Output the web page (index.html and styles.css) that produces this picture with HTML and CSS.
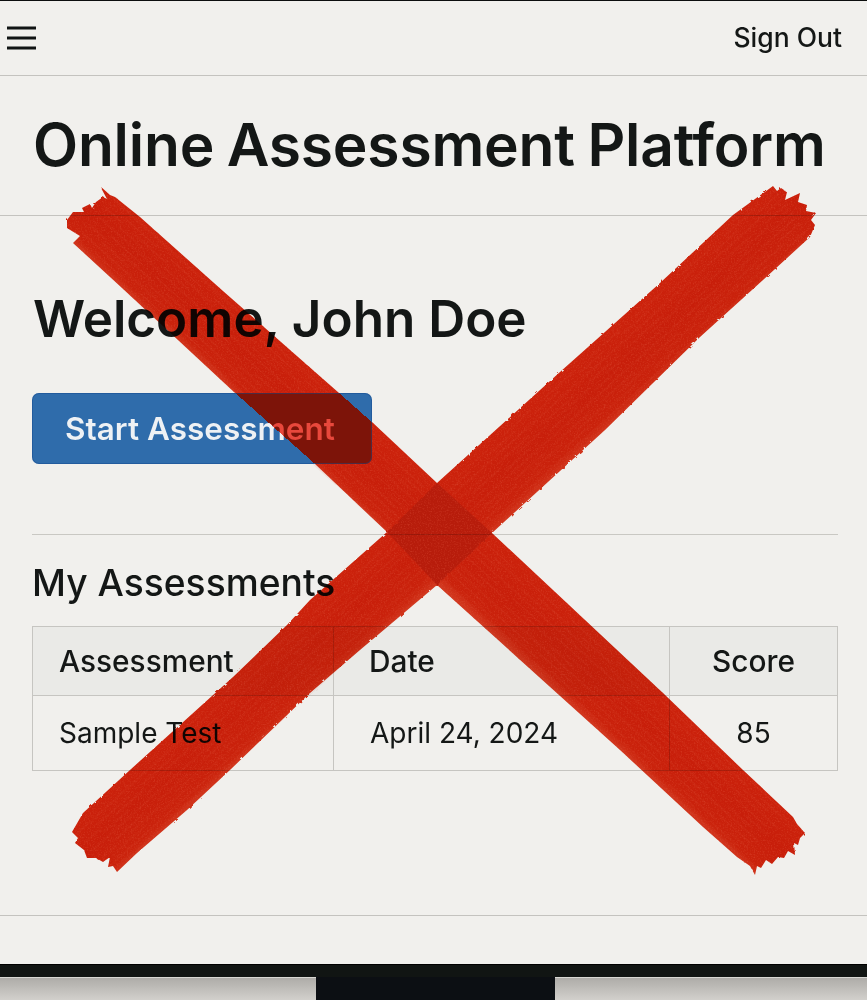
FILE: index.html
```html
<!DOCTYPE html>
<html lang="en">
<head>
    <meta charset="UTF-8">
    <meta name="viewport" content="width=device-width, initial-scale=1.0">
    <title>Online Assessment Platform</title>
    <link rel="stylesheet" href="styles.css">
</head>
<body>
    <div class="screen">
        <div class="topbar">
            <svg class="menu-icon" width="30" height="24" viewBox="0 0 30 24">
                <path d="M0 2H29M0 12H29M0 22H29" stroke="#111414" stroke-width="3" fill="none"/>
            </svg>
            <a class="sign-out">Sign Out</a>
        </div>
        <div class="title-bar">
            <h1>Online Assessment Platform</h1>
        </div>
        <div class="content">
            <h2>Welcome, John Doe</h2>
            <button class="start-btn"><span>Start Assessment</span></button>
            <hr>
            <h3>My Assessments</h3>
            <table class="results">
                <thead>
                    <tr>
                        <th class="col-name">Assessment</th>
                        <th class="col-date">Date</th>
                        <th class="col-score">Score</th>
                    </tr>
                </thead>
                <tbody>
                    <tr>
                        <td>Sample Test</td>
                        <td class="date-cell">April 24, 2024</td>
                        <td class="col-score">85</td>
                    </tr>
                </tbody>
            </table>
        </div>
        <div class="footer-line"></div>
    </div>
    <div class="bezel"></div>
    <div class="stand">
        <div class="desk"></div>
        <div class="neck"></div>
        <div class="desk"></div>
    </div>

    <!-- red cross painted over the page -->
    <svg class="cross" width="867" height="1000" viewBox="0 0 867 1000">
        <defs>
            <filter id="brush" x="0" y="0" width="867" height="1000" filterUnits="userSpaceOnUse" color-interpolation-filters="sRGB">
                <feTurbulence type="fractalNoise" baseFrequency="0.18" numOctaves="3" seed="4" result="wobble"/>
                <feDisplacementMap in="SourceGraphic" in2="wobble" scale="2.5" result="rough"/>
                <feTurbulence type="fractalNoise" baseFrequency="0.7" numOctaves="2" seed="9" result="grain"/>
                <feColorMatrix in="grain" type="matrix" values="0 0 0 0 0.95  0 0 0 0 0.4  0 0 0 0 0.3  0 0 0 0.8 -0.38" result="spots"/>
                <feComposite in="spots" in2="rough" operator="in" result="light"/>
                <feMerge>
                    <feMergeNode in="rough"/>
                    <feMergeNode in="light"/>
                </feMerge>
            </filter>
            <linearGradient id="paint-down" gradientUnits="userSpaceOnUse" x1="437" y1="483" x2="388" y2="536">
                <stop offset="0" stop-color="#d8240c"/>
                <stop offset=".5" stop-color="#d4200a"/>
                <stop offset=".88" stop-color="#d6240c"/>
                <stop offset="1" stop-color="#de3a20"/>
            </linearGradient>
            <linearGradient id="paint-up" gradientUnits="userSpaceOnUse" x1="437" y1="483" x2="487" y2="538">
                <stop offset="0" stop-color="#d8240c"/>
                <stop offset=".5" stop-color="#d4200a"/>
                <stop offset=".88" stop-color="#d6240c"/>
                <stop offset="1" stop-color="#de3a20"/>
            </linearGradient>
            <pattern id="streaks-down" width="60" height="23" patternUnits="userSpaceOnUse" patternTransform="rotate(42)">
                <path d="M0 3H60M0 9.5H42M20 15H60M0 20H34" stroke="#e8553c" stroke-width="1" opacity=".18" fill="none"/>
            </pattern>
            <pattern id="streaks-up" width="60" height="23" patternUnits="userSpaceOnUse" patternTransform="rotate(-42)">
                <path d="M0 4H60M0 11H42M20 16H60M0 21H34" stroke="#e8553c" stroke-width="1" opacity=".18" fill="none"/>
            </pattern>
        </defs>
        <g filter="url(#brush)">
            <polygon fill="url(#paint-down)" points="115,197 140,217 223,291 372,422 437,483 492,533 663,693 743,770 793,817 797,824 805,833 800,838 798,845 794,843 795,855 788,851 784,858 778,857 772,864 766,860 761,868 757,866 755,875 750,866 737,857 703,827 620,750 437,585 387,532 315,464 235,393 122,288 73,243 80,236 67,228 67,220 73,212 84,212 82,208 90,204 92,208 96,202 103,197 107,199 100,186 110,195"/>
            <polygon fill="url(#paint-up)" points="773,186 777,191 781,188 787,192 785,200 800,193 798,202 807,205 806,211 816,213 811,220 815,225 810,237 763,280 700,337 605,430 492,533 437,585 360,650 310,693 230,770 187,810 137,853 117,872 113,866 108,867 110,857 103,862 96,858 87,858 84,850 75,843 78,838 72,832 83,813 130,770 233,677 287,625 310,600 387,532 437,483 560,372 660,283 733,215"/>
            <polygon fill="url(#streaks-down)" points="115,197 793,817 737,857 73,243"/>
            <polygon fill="url(#streaks-up)" points="773,186 810,237 117,872 72,832"/>
            <polygon class="overlap" points="437,483 492,533 437,585 387,532"/>
        </g>
    </svg>
</body>
</html>
```

FILE: styles.css
```css
* {
    box-sizing: border-box;
}

html, body {
    height: 1000px;
    overflow: hidden;
}

body {
    margin: 0;
    background: #f1f0ed;
    color: #141716;
    font-family: "Inter", "Liberation Sans", sans-serif;
}

.screen {
    height: 964px;
    border-top: 1px solid #0c0e0e;
    display: flex;
    flex-direction: column;
}

.topbar {
    height: 75px;
    padding: 0 25px 0 7px;
    border-bottom: 1px solid #c4c3bf;
    display: flex;
    align-items: center;
    justify-content: space-between;
}

.sign-out {
    font-size: 26.5px;
    font-weight: 500;
    margin-bottom: 2px;
}

.title-bar {
    height: 140px;
    padding: 0 33px;
    border-bottom: 1px solid #c4c3bf;
}

h1 {
    margin: 0;
    padding-top: 34px;
    font-size: 58.7px;
    line-height: 70px;
    font-weight: 600;
    letter-spacing: -0.2px;
    word-spacing: -2px;
    white-space: nowrap;
}

.content {
    flex: 1;
    padding: 0 29px 0 32px;
}

h2 {
    margin: 0;
    padding: 72px 0 0 1px;
    font-size: 51.2px;
    line-height: 60px;
    font-weight: 600;
}

.start-btn {
    display: block;
    position: relative;
    z-index: 2; /* sits above the cross, its overlap is in the gradient */
    width: 340px;
    height: 71px;
    margin-top: 45px;
    padding: 0;
    border: 0;
    border-radius: 7px;
    background: linear-gradient(41.6deg, #2f6cab 188px, #7d1409 188px, #7d1409 257px, #2f6cab 257px);
    box-shadow: inset 0 0 0 1px rgba(20, 70, 140, 0.45);
    font: inherit;
}

.start-btn span {
    display: block;
    height: 71px;
    padding-left: 33px;
    text-align: left;
    font-size: 31.5px;
    font-weight: 600;
    line-height: 71px;
    white-space: nowrap;
    color: transparent;
    background: linear-gradient(41.6deg, #eef1f4 188px, #e8483c 188px);
    -webkit-background-clip: text;
    background-clip: text;
}

hr {
    margin: 70px 0 0;
    border: 0;
    border-top: 1px solid #c9c8c3;
}

h3 {
    margin: 0;
    padding-top: 24px;
    font-size: 37.2px;
    line-height: 48px;
    font-weight: 500;
}

.results {
    width: 806px;
    margin-top: 19px;
    border-collapse: collapse;
    table-layout: fixed;
    font-size: 28px;
}

.results th, .results td {
    border: 1px solid #c6c5c1;
    padding: 0 26px;
    text-align: left;
}

.results th {
    height: 69px;
    background: #eaeae7;
    font-size: 29.8px;
    font-weight: 500;
}

.results td {
    height: 75px;
    font-weight: 400;
}

.col-name {
    width: 301px;
}

.col-date {
    width: 336px;
    padding-left: 35px !important;
}

.date-cell {
    padding-left: 36px !important;
}

.results .col-score {
    text-align: center;
}

.footer-line {
    height: 49px;
    border-top: 1px solid #c4c3bf;
}

.bezel {
    height: 13px;
    background: #111513;
    border-top: 1px solid #000;
}

.stand {
    height: 23px;
    display: grid;
    grid-template-columns: 316px 239px 1fr;
}

.desk {
    background: linear-gradient(#aeaca8, #d2d0cc);
    border-top: 1px solid #d8d7d3;
}

.neck {
    background: #0c0f13;
}

.cross {
    position: absolute;
    left: 0;
    top: 0;
    z-index: 1;
    mix-blend-mode: multiply;
    pointer-events: none;
}

.overlap {
    fill: #c21d0b;
}
```
